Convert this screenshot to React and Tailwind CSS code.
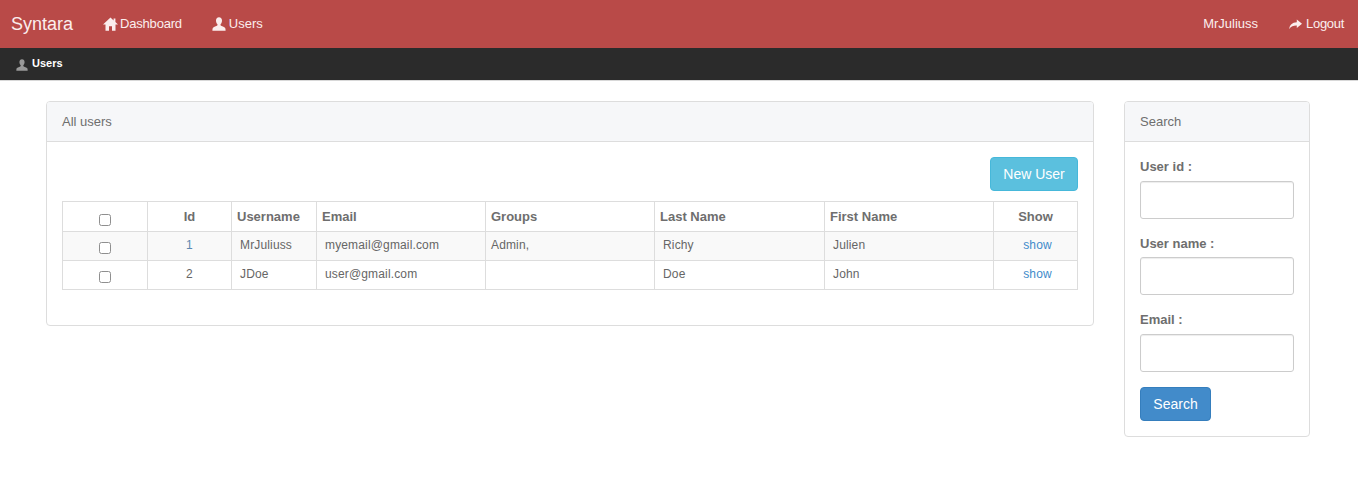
const UserIcon = ({ className }) => (
  <svg viewBox="0 0 14 14" className={className} fill="currentColor">
    <path d="M7 0.3C5.1 0.3 4 1.7 4 3.4C4 4.9 4.5 6.2 5.3 7.1C5.6 7.5 5.6 8 5.3 8.4C4.6 9.2 1.4 9.7 0.8 10.9C0.5 11.5 0.4 12.5 0.4 13.7H13.6C13.6 12.5 13.5 11.5 13.2 10.9C12.6 9.7 9.4 9.2 8.7 8.4C8.4 8 8.4 7.5 8.7 7.1C9.5 6.2 10 4.9 10 3.4C10 1.7 8.9 0.3 7 0.3Z" />
  </svg>
);
const HomeIcon = ({ className }) => (
  <svg viewBox="0 0 15 14" className={className} fill="currentColor">
    <path d="M7.5 0.5L0 7.5H2.5V13.7H6V9.2H9V13.7H12.5V7.5H15L12.4 5V1.4H10.6V3.4Z" />
  </svg>
);
const ShareIcon = ({ className }) => (
  <svg viewBox="0 0 14 14" className={className} fill="currentColor">
    <path d="M8.4 1.6L14 6.2L8.4 10.8V8C5 7.9 2.4 8.6 0.3 11.8C0.6 7.6 3.4 4.7 8.4 4.5Z" />
  </svg>
);

const rows = [
  { id: "1", u: "MrJuliuss", e: "myemail@gmail.com", g: "Admin,", l: "Richy", f: "Julien" },
  { id: "2", u: "JDoe", e: "user@gmail.com", g: "", l: "Doe", f: "John" },
];

const Field = ({ label, className }) => (
  <div className={className}>
    <label className="block text-[13px] leading-[18.57px] font-bold text-[#6e6e6e] mb-[5px] translate-y-[1px]">{label}</label>
    <input className="block w-full h-[38px] border border-[#cccccc] rounded-[3px] bg-white shadow-[inset_0_1px_1px_rgba(0,0,0,0.075)]" />
  </div>
);

const Box = ({ head }) => <input type="checkbox" className={head ? "block ml-[36px] w-[12px] h-[12px] appearance-none bg-white border border-[#8f8f8f] rounded-[2.5px] translate-y-[3px]" : "block ml-[36px] w-[12px] h-[12px] appearance-none bg-white border border-[#8f8f8f] rounded-[2.5px] translate-y-[2px]"} />;

const cell = "border border-[#dddddd] pb-[2px]";

export default function App() {
  return (
    <div className="min-h-[482px] bg-white font-['Liberation_Sans',Arial,sans-serif] text-[#666666]">
      <nav className="h-[48px] bg-[#b94a48] flex items-center text-white pl-[11px] pr-[14px]">
        <span className="text-[18px] leading-[20px] text-[#fbeeee] mr-[30px]">Syntara</span>
        <a className="flex items-center text-[13px] tracking-[-0.2px] text-[#fbeeee] mr-[30px]"><HomeIcon className="w-[15px] h-[14px] mr-[2px]" />Dashboard</a>
        <a className="flex items-center text-[13px] text-[#fbeeee]"><UserIcon className="w-[14px] h-[14px] mr-[3px]" />Users</a>
        <span className="ml-auto text-[13px] text-[#fbeeee] mr-[31px]">MrJuliuss</span>
        <a className="flex items-center text-[13px] tracking-[-0.3px] text-[#fbeeee]"><ShareIcon className="w-[13px] h-[13px] mr-[4px]" />Logout</a>
      </nav>
      <div className="h-[33px] bg-[#2b2b2b] border-b border-[#d8d8d8] flex items-center pl-[16px]">
        <UserIcon className="w-[12px] h-[12px] text-[#999999] mr-[4px] mt-[2px]" />
        <span className="text-[11px] font-bold text-white -translate-y-[1px]">Users</span>
      </div>
      <main className="flex items-start pt-[20px] pl-[46px]">
        <section className="w-[1048px] h-[225px] border border-[#dddddd] rounded-[4px] mr-[30px] overflow-hidden">
          <div className="h-[40px] bg-[#f6f7f9] border-b border-[#dddddd] flex items-center px-[15px] text-[13px] text-[#6e6e6e]">All users</div>
          <div className="px-[15px] pt-[15px]">
            <div className="flex justify-end mb-[10px]">
              <button className="h-[34px] w-[88px] bg-[#5bc0de] border border-[#46b8da] rounded-[4px] text-white text-[14px]">New User</button>
            </div>
            <table className="w-[1015px] table-fixed border-collapse text-[12px] tracking-[0.15px]">
              <colgroup>
                <col className="w-[85px]" /><col className="w-[84px]" /><col className="w-[85px]" /><col className="w-[169px]" /><col className="w-[169px]" /><col className="w-[170px]" /><col className="w-[169px]" /><col className="w-[84px]" />
              </colgroup>
              <thead>
                <tr className="h-[30px] text-[13px] text-[#6e6e6e] tracking-normal">
                  <th className="border border-[#dddddd]"><Box head /></th>
                  <th className="border border-[#dddddd] text-center font-bold">Id</th>
                  <th className="border border-[#dddddd] text-left px-[5px] font-bold">Username</th>
                  <th className="border border-[#dddddd] text-left px-[5px] font-bold">Email</th>
                  <th className="border border-[#dddddd] text-left px-[5px] font-bold">Groups</th>
                  <th className="border border-[#dddddd] text-left px-[5px] font-bold">Last Name</th>
                  <th className="border border-[#dddddd] text-left px-[5px] font-bold">First Name</th>
                  <th className="border border-[#dddddd] text-center font-bold">Show</th>
                </tr>
              </thead>
              <tbody>
                {rows.map((r, i) => (
                  <tr key={r.id} className={i === 0 ? "h-[29px] bg-[#f9f9f9]" : "h-[29px]"}>
                    <td className="border border-[#dddddd]"><Box /></td>
                    <td className={i === 0 ? cell + " text-center text-[#5b88b0]" : cell + " text-center"}>{r.id}</td>
                    <td className={cell + " pl-[8px]"}>{r.u}</td>
                    <td className={cell + " pl-[8px]"}>{r.e}</td>
                    <td className={cell + " pl-[5px]"}>{r.g}</td>
                    <td className={cell + " pl-[8px]"}>{r.l}</td>
                    <td className={cell + " pl-[8px]"}>{r.f}</td>
                    <td className={cell + " pl-[4px] text-center text-[#428bca]"}>show</td>
                  </tr>
                ))}
              </tbody>
            </table>
          </div>
        </section>
        <aside className="w-[186px] h-[336px] border border-[#dddddd] rounded-[4px] overflow-hidden">
          <div className="h-[40px] bg-[#f6f7f9] border-b border-[#dddddd] flex items-center px-[15px] text-[13px] text-[#6e6e6e]">Search</div>
          <div className="px-[15px] pt-[15px]">
            <Field label="User id :" className="mb-[15px]" />
            <Field label="User name :" className="mb-[15px]" />
            <Field label="Email :" className="mb-[15px]" />
            <button className="h-[34px] w-[71px] pt-[1px] bg-[#428bca] border border-[#357ebd] rounded-[4px] text-white text-[14px]">Search</button>
          </div>
        </aside>
      </main>
    </div>
  );
}
